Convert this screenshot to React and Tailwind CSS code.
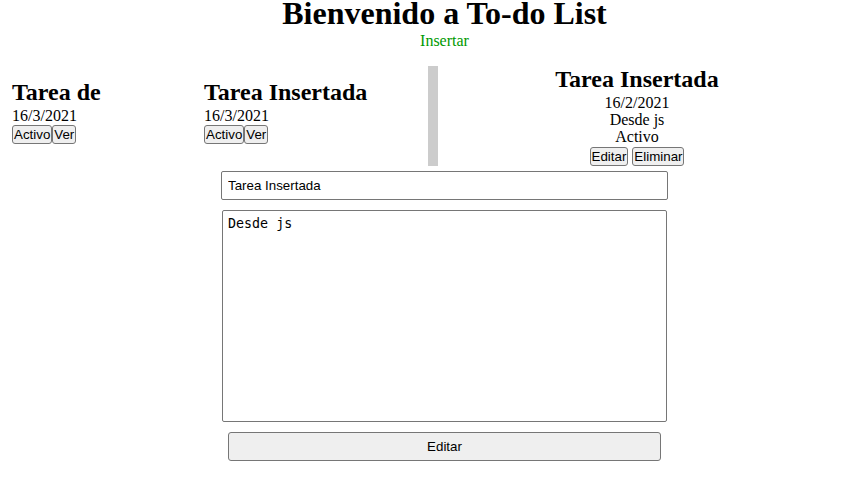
import React from "react";

function SmallBtn({ children }) {
  return (
    <button className="box-border rounded-[3px] border border-solid border-[#767676] bg-[#efefef] px-px py-px font-['Liberation_Sans',Arial,sans-serif] text-[13.33px] leading-[15px] text-black">
      {children}
    </button>
  );
}

function Card({ title, date }) {
  return (
    <div className="w-[192px] shrink-0 pt-[13px]">
      <h2 className="m-0 text-[24px] font-bold leading-[27.6px]">{title}</h2>
      <div className="text-[16px] leading-[17px]">{date}</div>
      <div className="mt-[1px] flex">
        <SmallBtn>Activo</SmallBtn>
        <SmallBtn>Ver</SmallBtn>
      </div>
    </div>
  );
}

export default function App() {
  return (
    <div className="min-h-[489px] w-[859px] bg-white font-['Liberation_Serif','Times_New_Roman',serif] text-black">
      <div className="pl-[30px] text-center">
        <h1 className="m-0 text-[32px] font-bold leading-[26px]">Bienvenido a To-do List</h1>
        <div className="mt-[6px] text-[16px] leading-[18px] text-[#009900]">Insertar</div>
      </div>

      <div className="mt-[16px] flex h-[100px]">
        <div className="flex w-[428px] shrink-0 pl-[12px]">
          <Card title="Tarea de" date="16/3/2021" />
          <Card title="Tarea Insertada" date="16/3/2021" />
        </div>
        <div className="w-[10px] shrink-0 bg-[#cccccc]"></div>
        <div className="flex w-[398px] shrink-0 flex-col items-center text-center">
          <h2 className="m-0 text-[24px] font-bold leading-[27.6px]">Tarea Insertada</h2>
          <div className="text-[16px] leading-[17px]">16/2/2021</div>
          <div className="text-[16px] leading-[17px]">Desde js</div>
          <div className="text-[16px] leading-[17px]">Activo</div>
          <div className="mt-[2px] flex gap-[4px]">
            <SmallBtn>Editar</SmallBtn>
            <SmallBtn>Eliminar</SmallBtn>
          </div>
        </div>
      </div>

      <div className="mt-[5px] flex flex-col items-center pl-[30px]">
        <input
          readOnly
          value="Tarea Insertada"
          className="box-border h-[29px] w-[447px] rounded-[2px] border border-solid border-[#767676] bg-white px-[6px] font-['Liberation_Sans',Arial,sans-serif] text-[13.33px] text-black outline-none"
        />
        <textarea
          readOnly
          value="Desde js"
          className="mt-[10px] box-border h-[212px] w-[445px] resize-none rounded-[2px] border border-solid border-[#767676] bg-white px-[5px] py-[5px] font-['DejaVu_Sans_Mono',monospace] text-[13.33px] leading-[15px] text-black outline-none"
        />
        <button className="mt-[10px] box-border h-[29px] w-[433px] rounded-[3px] border border-solid border-[#767676] bg-[#efefef] font-['Liberation_Sans',Arial,sans-serif] text-[13.33px] text-black">
          Editar
        </button>
      </div>
    </div>
  );
}
